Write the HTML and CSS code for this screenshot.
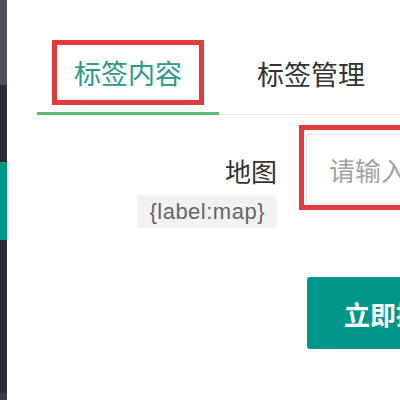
FILE: index.html
```html
<!DOCTYPE html>
<html lang="zh-CN">
<head>
    <meta charset="UTF-8">
    <title>标签内容</title>
    <link rel="stylesheet" href="styles.css">
</head>
<body>
    <div class="layout">
        <div class="side">
            <div class="side-top"></div>
            <div class="side-dark"></div>
            <div class="side-active"></div>
            <div class="side-rest"></div>
            <div class="side-foot"></div>
        </div>
        <div class="main">
            <ul class="tab-title">
                <li class="tab-item this"><span class="mark">标签内容</span></li>
                <li class="tab-item">标签管理</li>
            </ul>

            <form class="form">
                <div class="form-item">
                    <div class="form-label">
                        <span class="label-name">地图</span>
                        <span class="label-tag">{label:map}</span>
                    </div>
                    <div class="input-block mark-box">
                        <input class="input" type="text" placeholder="请输入">
                    </div>
                </div>
                <div class="form-item">
                    <div class="form-label"></div>
                    <div class="btn-block">
                        <button class="btn" type="button">立即提交</button>
                    </div>
                </div>
            </form>
        </div>
    </div>
</body>
</html>
```

FILE: styles.css
```css
body {
    margin: 0;
    background-color: #fff;
    font-family: "Noto Sans CJK SC", "Liberation Sans", sans-serif;
    color: #333;
}

.layout {
    display: flex;
    height: 100vh;
    overflow: hidden;
}

/* left menu, only its edge is visible */
.side {
    width: 7px;
    flex-shrink: 0;
    display: flex;
    flex-direction: column;
}

.side-top {
    height: 85px;
    background-color: #4f4e5d;
}

.side-dark {
    height: 77px;
    background-color: #2a2b32;
}

.side-active {
    height: 78px;
    background-color: #009688;
}

.side-rest {
    flex-grow: 1;
    background-color: #2a2b32;
}

.side-foot {
    height: 7px;
    background-color: #3b3b44;
}

.main {
    flex-grow: 1;
    padding: 40px 0 0 30px;
    min-width: 0;
}

/* tabs */
.tab-title {
    display: flex;
    margin: 0;
    padding: 0;
    list-style: none;
    border-bottom: 1px solid #e6e6e6;
    white-space: nowrap;
}

.tab-item {
    height: 72px;
    line-height: 67px;
    padding: 0 38px;
    font-size: 27px;
    color: #333;
    box-sizing: border-box;
}

.tab-item.this {
    height: 75px;
    padding: 0 15px;
    margin-bottom: -1px;
    line-height: normal;
    color: #2a9a8a;
    border-bottom: 3px solid #5fb878;
}

.mark {
    display: block;
    height: 65px;
    line-height: 55px;
    padding: 0 17px;
    border: 5px solid #e03b3e;
    box-sizing: border-box;
}

/* form */
.form {
    padding-top: 10px;
}

.form-item {
    display: flex;
    gap: 22px;
    margin-bottom: 49px;
}

.form-label {
    width: 240px;
    flex-shrink: 0;
    display: flex;
    flex-direction: column;
    align-items: flex-end;
}

.label-name {
    margin-top: 31px;
    line-height: 30px;
    font-size: 26px;
    color: #333;
}

.label-tag {
    margin-top: 9px;
    height: 33px;
    line-height: 33px;
    padding: 0 12px;
    background-color: #f2f2f2;
    border-radius: 3px;
    font-family: "Liberation Sans", sans-serif;
    font-size: 22px;
    letter-spacing: 0.5px;
    color: #666;
}

.input-block {
    flex-grow: 1;
    min-width: 0;
}

.mark-box {
    height: 85px;
    padding: 4px 0 0 2px;
    border: 5px solid #e03b3e;
    border-right: none;
    box-sizing: border-box;
}

.input {
    display: block;
    width: 100%;
    height: 70px;
    padding: 0 0 0 22px;
    border: 1px solid #e6e6e6;
    border-right: none;
    box-sizing: border-box;
    font-family: "Noto Sans CJK SC", sans-serif;
    font-size: 26px;
    color: #333;
    outline: none;
}

.input::placeholder {
    color: #a3a3a3;
}

.btn-block {
    flex-grow: 1;
    padding-left: 8px;
}

.btn {
    height: 72px;
    padding: 0 37px;
    background-color: #009688;
    color: #fff;
    border: none;
    border-radius: 3px;
    font-family: "Noto Sans CJK SC", sans-serif;
    font-size: 26px;
    font-weight: bold;
    white-space: nowrap;
    cursor: pointer;
}
```
